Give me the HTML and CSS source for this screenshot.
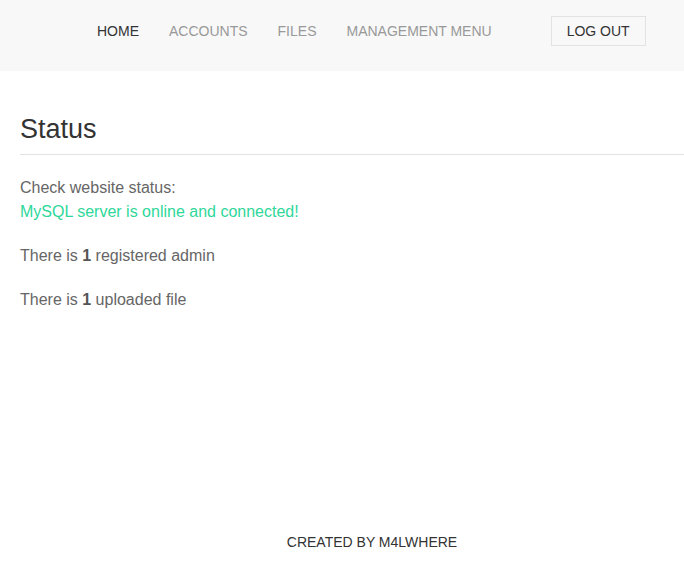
FILE: index.html
```html
<!DOCTYPE html>
<html>
<head>
<meta charset="utf-8">
<link rel="stylesheet" href="styles.css">
</head>
<body>
<nav class="navbar">
  <ul class="nav-links">
    <li><a class="active" href="#">HOME</a></li>
    <li><a href="#">ACCOUNTS</a></li>
    <li><a href="#">FILES</a></li>
    <li><a href="#">MANAGEMENT MENU</a></li>
  </ul>
  <a class="logout" href="#">LOG OUT</a>
</nav>
<main class="content">
  <h1 class="title">Status</h1>
  <p class="status">Check website status:<br><span class="online">MySQL server is online and connected!</span></p>
  <p>There is <b>1</b> registered admin</p>
  <p>There is <b>1</b> uploaded file</p>
</main>
<footer class="footer">CREATED BY M4LWHERE</footer>
</body>
</html>
```
FILE: styles.css
```css
html, body {
  margin: 0;
  padding: 0;
  height: 100%;
}
body {
  font-family: "Liberation Sans", Arial, sans-serif;
  color: #666;
  background: #fff;
  display: flex;
  flex-direction: column;
  overflow: hidden;
}
.navbar {
  background: #f8f8f8;
  height: 71px;
  display: flex;
  align-items: flex-start;
  padding: 16px 0 0 82px;
  box-sizing: border-box;
}
.nav-links {
  list-style: none;
  margin: 0;
  padding: 0;
  display: flex;
}
.nav-links a {
  display: block;
  padding: 0 15px;
  font-size: 14px;
  color: #999;
  text-decoration: none;
  line-height: 30px;
}
.nav-links a.active {
  color: #333;
}
.logout {
  margin-left: 44px;
  display: block;
  width: 95px;
  height: 30px;
  box-sizing: border-box;
  border: 1px solid #e2e2e2;
  color: #333;
  font-size: 14px;
  text-decoration: none;
  text-align: center;
  line-height: 28px;
}
.content {
  padding: 0 0 0 20px;
  flex: 1;
}
.title {
  font-size: 27px;
  font-weight: normal;
  color: #333;
  margin: 42px 0 0;
  padding-bottom: 9px;
  line-height: 32px;
  border-bottom: 1px solid #e3e3e3;
}
.content p {
  font-size: 16px;
  line-height: 24px;
  margin: 20px 0 0;
}
.content p.status {
  margin-top: 21px;
}
.content b {
  color: #555;
}
.online {
  color: #2ed79a;
}
.footer {
  font-size: 14px;
  color: #333;
  text-align: center;
  padding: 0 0 14px 60px;
  line-height: 20px;
}
```
